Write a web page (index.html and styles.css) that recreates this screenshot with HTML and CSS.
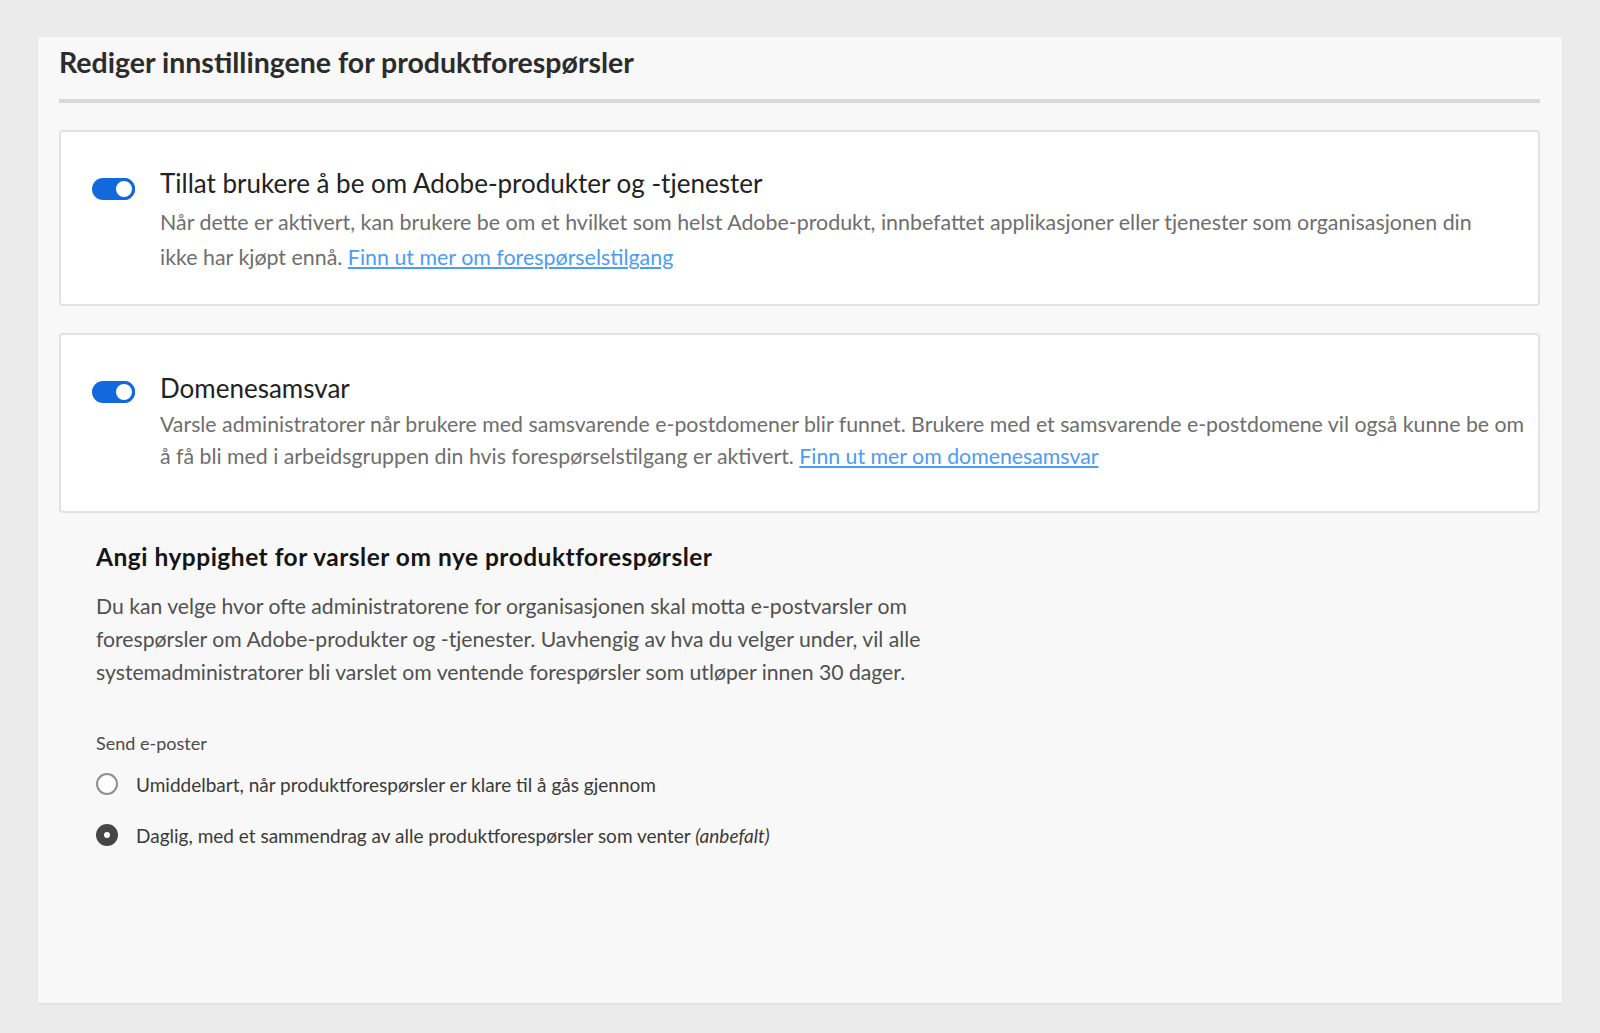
FILE: index.html
```html
<!DOCTYPE html>
<html lang="no">
<head>
    <meta charset="UTF-8">
    <meta name="viewport" content="width=device-width, initial-scale=1.0">
    <title>Rediger innstillingene for produktforespørsler</title>
    <link rel="stylesheet" href="styles.css">
</head>
<body>

<div class="panel">
    <header class="panel-header">
        <h1>Rediger innstillingene for produktforespørsler</h1>
    </header>

    <!-- Forespørselstilgang -->
    <div class="setting-card">
        <span class="switch"><span class="switch-knob"></span></span>
        <div class="setting-text">
            <h2>Tillat brukere å be om Adobe-produkter og -tjenester</h2>
            <p>Når dette er aktivert, kan brukere be om et hvilket som helst Adobe-produkt, innbefattet applikasjoner eller tjenester som organisasjonen din<br>ikke har kjøpt ennå. <a href="#">Finn ut mer om forespørselstilgang</a></p>
        </div>
    </div>

    <!-- Domenesamsvar -->
    <div class="setting-card compact">
        <span class="switch"><span class="switch-knob"></span></span>
        <div class="setting-text">
            <h2>Domenesamsvar</h2>
            <p>Varsle administratorer når brukere med samsvarende e-postdomener blir funnet. Brukere med et samsvarende e-postdomene vil også kunne be om<br>å få bli med i arbeidsgruppen din hvis forespørselstilgang er aktivert. <a href="#">Finn ut mer om domenesamsvar</a></p>
        </div>
    </div>

    <section class="frequency">
        <h3>Angi hyppighet for varsler om nye produktforespørsler</h3>
        <p>Du kan velge hvor ofte administratorene for organisasjonen skal motta e-postvarsler om<br>forespørsler om Adobe-produkter og -tjenester. Uavhengig av hva du velger under, vil alle<br>systemadministratorer bli varslet om ventende forespørsler som utløper innen 30 dager.</p>

        <div class="radio-group">
            <div class="radio-title">Send e-poster</div>
            <label class="radio">
                <span class="radio-circle"></span>
                Umiddelbart, når produktforespørsler er klare til å gås gjennom
            </label>
            <label class="radio">
                <span class="radio-circle checked"></span>
                Daglig, med et sammendrag av alle produktforespørsler som venter&nbsp;<em>(anbefalt)</em>
            </label>
        </div>
    </section>
</div>

</body>
</html>
```

FILE: styles.css
```css
body {
    margin: 0;
    padding: 37px 38px 30px;
    background-color: #ebebeb;
    font-family: 'Lato', 'Open Sans', sans-serif;
    color: #2c2c2c;
}

.panel {
    min-height: 966px;
    box-sizing: border-box;
    padding: 8px 22px 0 21px;
    background-color: #f8f8f8;
    box-shadow: 0 1px 2px rgba(0, 0, 0, 0.08);
}

.panel-header {
    padding-bottom: 20px;
    border-bottom: 4px solid #d9d9d9;
}

h1 {
    margin: 0;
    font-size: 28.5px;
    line-height: 34px;
    font-weight: 700;
    color: #2c2c2c;
}

/* Kortene med brytere */
.setting-card {
    display: flex;
    align-items: flex-start;
    margin-top: 27px;
    padding: 35px 4px 29px 31px;
    background-color: #fff;
    border: 2px solid #e2e2e2;
    border-radius: 4px;
}

.switch {
    flex: 0 0 43px;
    height: 22px;
    margin-top: 11px;
    margin-right: 25px;
    display: flex;
    justify-content: flex-end;
    background-color: #1268dd;
    border-radius: 11px;
}

.switch-knob {
    width: 22px;
    height: 22px;
    box-sizing: border-box;
    border: 3px solid #1268dd;
    border-radius: 50%;
    background-color: #fff;
}

.setting-text {
    min-width: 0;
}

.setting-text h2 {
    margin: 0 0 6px;
    font-size: 26px;
    line-height: 32px;
    font-weight: 400;
    color: #222;
}

.setting-text p {
    margin: 0;
    font-size: 21.4px;
    line-height: 35px;
    white-space: nowrap;
    color: #6e6e6e;
}

.setting-text a {
    color: #4b9cf5;
    text-decoration: underline;
}

.compact {
    padding-bottom: 39px;
}

.compact h2 {
    margin: 4px 0 0;
    line-height: 28px;
}

.compact p {
    margin-top: 7px;
    font-size: 21.3px;
    line-height: 31.5px;
}

/* Hyppighet for varsler */
.frequency {
    padding: 0 37px;
}

.frequency h3 {
    margin: 29px 0 0;
    font-size: 24.5px;
    line-height: 30px;
    letter-spacing: 0.5px;
    font-weight: 700;
    color: #151515;
}

.frequency p {
    margin: 18px 0 0;
    font-size: 21.2px;
    line-height: 33px;
    color: #505050;
}

.radio-group {
    margin-top: 42px;
    display: flex;
    flex-direction: column;
    gap: 19px;
}

.radio-title {
    font-size: 18px;
    line-height: 24px;
    color: #4b4b4b;
    margin-bottom: -6px;
}

.radio {
    display: flex;
    align-items: center;
    height: 32px;
    font-size: 19px;
    color: #3a3a3a;
    cursor: pointer;
}

.radio em {
    font-style: italic;
}

.radio-circle {
    flex: 0 0 22px;
    height: 22px;
    box-sizing: border-box;
    margin-right: 18px;
    border: 2px solid #8e8e8e;
    border-radius: 50%;
    background-color: #fff;
}

.radio-circle.checked {
    border: 8px solid #464646;
}
```
